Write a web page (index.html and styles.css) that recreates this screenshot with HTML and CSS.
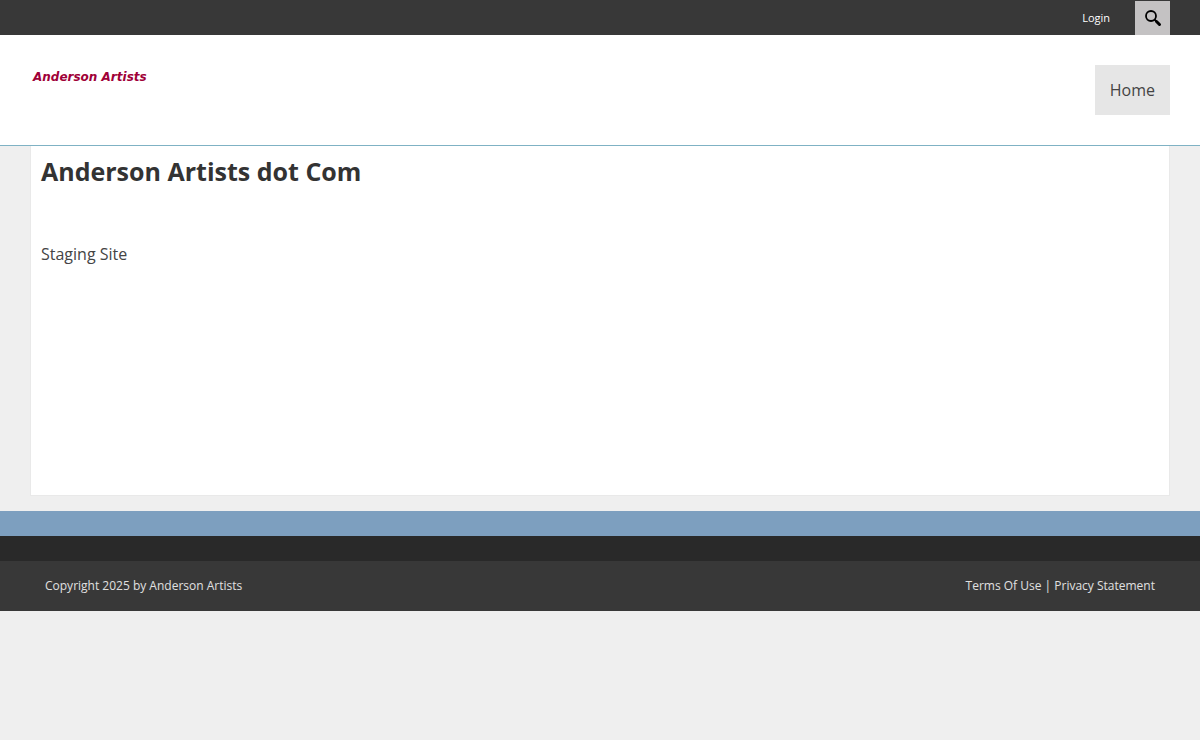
FILE: index.html
```html
<!DOCTYPE html>
<html lang="en">
<head>
    <meta charset="UTF-8">
    <meta name="viewport" content="width=device-width, initial-scale=1.0">
    <title>Anderson Artists</title>
    <link rel="stylesheet" href="styles.css">
</head>
<body>
    <div class="topbar">
        <a class="login" href="#">Login</a>
        <button class="search-toggle" type="button" aria-label="Search">
            <svg width="18" height="18" viewBox="0 0 18 18" fill="none" stroke="#000">
                <circle cx="7" cy="7" r="5" stroke-width="1.8"/>
                <path d="M10.5 10.5l2 2" stroke-width="1.8"/>
                <path d="M12.5 12.5l3 3" stroke-width="3" stroke-linecap="round"/>
            </svg>
        </button>
    </div>

    <header class="header">
        <a class="logo" href="#">Anderson Artists</a>
        <nav>
            <ul class="navbar">
                <li><a href="#">Home</a></li>
            </ul>
        </nav>
    </header>

    <main class="content">
        <h1>Anderson Artists dot Com</h1>
        <p>Staging Site</p>
    </main>

    <footer>
        <div class="footer-accent"></div>
        <div class="footer-dark"></div>
        <div class="footer-bottom">
            <span>Copyright 2025 by Anderson Artists</span>
            <span><a href="#">Terms Of Use</a> | <a href="#">Privacy Statement</a></span>
        </div>
    </footer>
</body>
</html>
```

FILE: styles.css
```css
* {
    box-sizing: border-box;
}

body {
    font-family: "Open Sans", sans-serif;
    font-size: 16px;
    line-height: 24px;
    margin: 0;
    color: #444;
    background-color: #efefef;
}

a {
    color: inherit;
    text-decoration: none;
}

/* Top bar */
.topbar {
    display: flex;
    justify-content: flex-end;
    align-items: center;
    gap: 25px;
    height: 35px;
    padding: 1px 30px 0;
    background-color: #383838;
}

.login {
    font-size: 11px;
    font-weight: 500;
    color: #fff;
}

.search-toggle {
    display: flex;
    align-items: center;
    justify-content: center;
    width: 35px;
    height: 34px;
    padding: 0;
    border: 0;
    background-color: #c4c2c3;
    cursor: pointer;
}

/* Header */
.header {
    display: flex;
    justify-content: space-between;
    align-items: flex-start;
    padding: 30px;
    background-color: #fff;
    border-bottom: 1px solid #7fb2c4;
}

.logo {
    padding-left: 3px;
    font-family: "DejaVu Sans", sans-serif;
    font-size: 12px;
    font-weight: bold;
    font-style: italic;
    color: #a00038;
}

.navbar {
    list-style: none;
    margin: 0;
    padding: 0;
    display: flex;
}

.navbar a {
    display: block;
    padding: 13px 15px;
    background-color: #e6e6e6;
}

/* Content */
.content {
    min-height: 350px;
    margin: 0 30px 15px;
    padding: 10px;
    background-color: #fff;
    border: 1px solid #e9e9e9;
    border-top: 0;
}

.content h1 {
    margin: 0 0 56px;
    font-size: 25px;
    line-height: 30px;
    color: #333;
}

.content p {
    margin: 0;
}

/* Footer */
.footer-accent {
    height: 25px;
    background-color: #7d9fbf;
}

.footer-dark {
    height: 25px;
    background-color: #292929;
}

.footer-bottom {
    display: flex;
    justify-content: space-between;
    padding: 13px 45px;
    background-color: #383838;
    font-size: 12px;
    color: #e0e0e0;
}
```
